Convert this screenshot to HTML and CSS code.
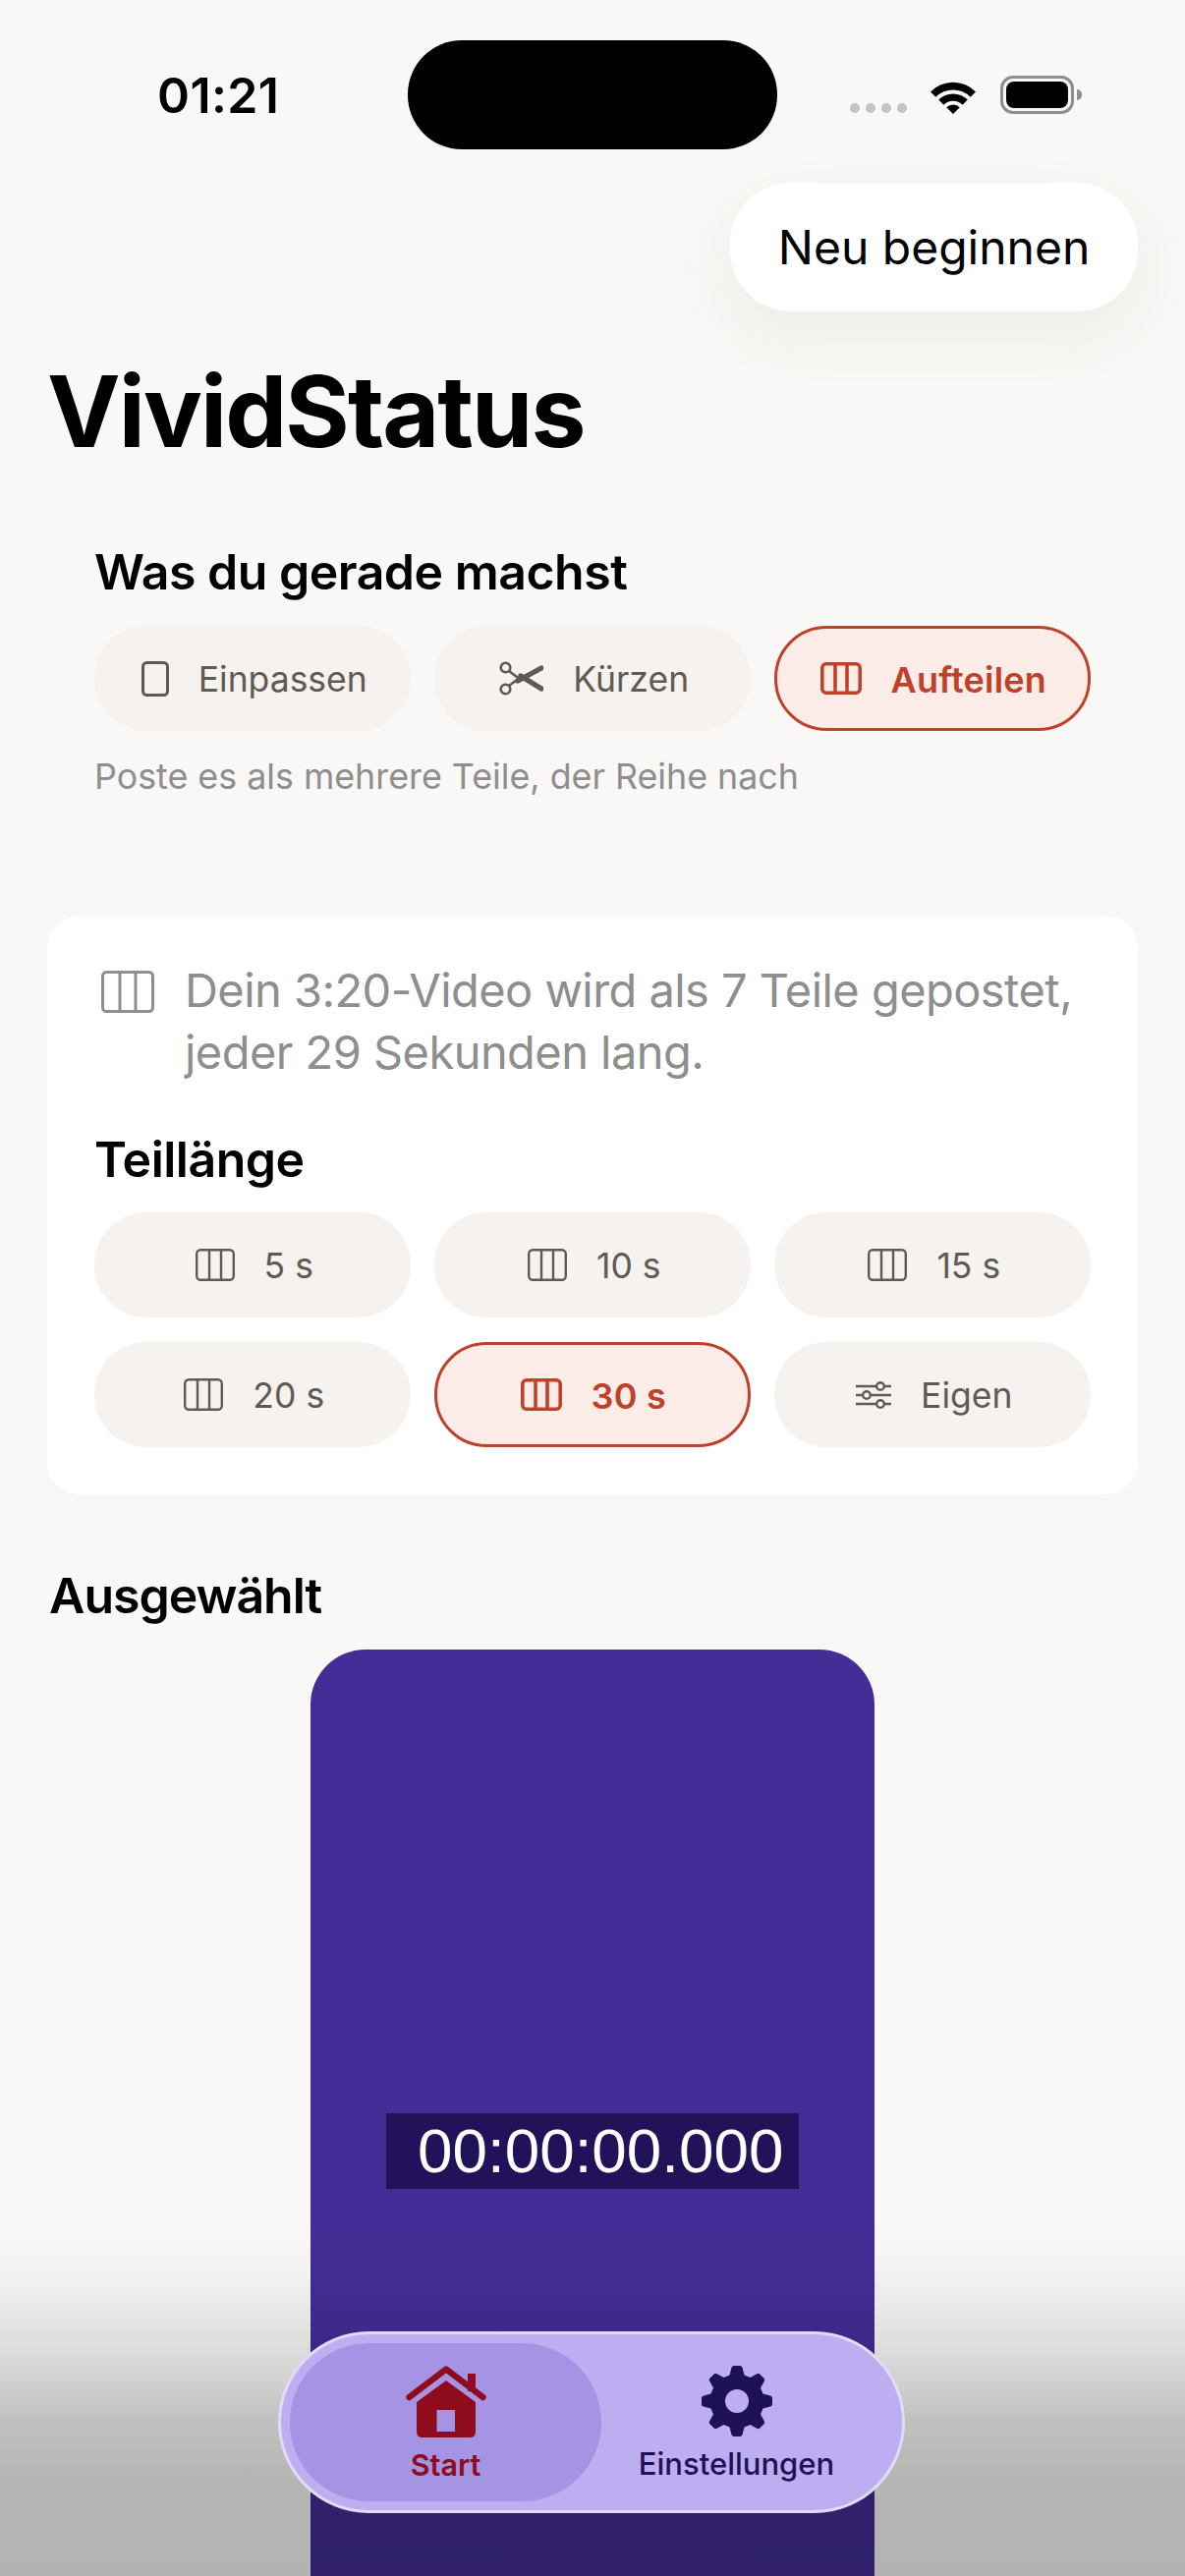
FILE: index.html
```html
<!DOCTYPE html>
<html lang="de">

<head>
  <meta charset="UTF-8">
  <meta name="viewport" content="width=device-width, initial-scale=1.0">
  <title>VividStatus</title>
  <link rel="stylesheet" href="styles.css">
</head>

<body>
  <svg class="defs" width="0" height="0">
    <symbol id="split" viewBox="0 0 40 33">
      <rect x="1.2" y="1.2" width="37.6" height="30.6" rx="4" fill="none" stroke="currentColor" stroke-width="2.4" />
      <path d="M14 1.2V31.8M26 1.2V31.8" fill="none" stroke="currentColor" stroke-width="2.4" />
    </symbol>
    <symbol id="split-bold" viewBox="0 0 42 33">
      <rect x="1.8" y="1.8" width="38.4" height="29.4" rx="4" fill="none" stroke="currentColor" stroke-width="3.6" />
      <path d="M15 1.8V31.2M27 1.8V31.2" fill="none" stroke="currentColor" stroke-width="3.6" />
    </symbol>
  </svg>

  <header class="status">
    <span class="status-time">01:21</span>
    <div class="island"></div>
    <div class="status-icons">
      <div class="signal"><i></i><i></i><i></i><i></i></div>
      <svg class="wifi" viewBox="0 0 50 37" width="50" height="37">
        <path d="M2 14.4A32.3 32.3 0 0 1 48 14.4L42.6 19.8A24.6 24.6 0 0 0 7.4 19.8Z" />
        <path d="M10.2 22.6A20.8 20.8 0 0 1 39.8 22.6L34.6 27.8A13.4 13.4 0 0 0 15.4 27.8Z" />
        <path d="M18.2 30.2A9.8 9.8 0 0 1 31.8 30.2L25 37Z" />
      </svg>
      <div class="battery"><div class="battery-level"></div></div>
    </div>
  </header>

  <main>
    <div class="top-actions">
      <button class="restart">Neu beginnen</button>
    </div>
    <h1>VividStatus</h1>

    <section class="mode">
      <h2>Was du gerade machst</h2>
      <div class="chips">
        <div class="chip">
          <svg width="28" height="36" viewBox="0 0 28 36"><rect x="1.5" y="1.5" width="25" height="33" rx="4" fill="none" stroke="currentColor" stroke-width="3" /></svg>
          <span>Einpassen</span>
        </div>
        <div class="chip">
          <svg width="45" height="35" viewBox="0 0 45 35" fill="none" stroke="currentColor">
            <circle cx="6.5" cy="6.5" r="4.8" stroke-width="2.6" />
            <circle cx="6.5" cy="28.5" r="4.8" stroke-width="2.6" />
            <path d="M10 10L22 19M10 25L22 16" stroke-width="2.6" />
            <path d="M19 20L43 7M22 15L43 28" stroke-width="5.4" stroke-linecap="round" />
          </svg>
          <span>Kürzen</span>
        </div>
        <div class="chip active">
          <svg width="42" height="33"><use href="#split-bold" /></svg>
          <span>Aufteilen</span>
        </div>
      </div>
      <p class="hint">Poste es als mehrere Teile, der Reihe nach</p>
    </section>

    <section class="card">
      <div class="info">
        <svg width="54" height="43" viewBox="0 0 54 43" fill="none" stroke="currentColor" stroke-width="3">
          <rect x="1.5" y="1.5" width="51" height="40" rx="4" />
          <path d="M19 1.5V41.5M35 1.5V41.5" />
        </svg>
        <p>Dein 3:20-Video wird als 7 Teile gepostet,<br>jeder 29 Sekunden lang.</p>
      </div>
      <h2 class="card-title">Teillänge</h2>
      <div class="chips">
        <div class="chip"><svg width="40" height="33"><use href="#split" /></svg><span>5 s</span></div>
        <div class="chip"><svg width="40" height="33"><use href="#split" /></svg><span>10 s</span></div>
        <div class="chip"><svg width="40" height="33"><use href="#split" /></svg><span>15 s</span></div>
        <div class="chip"><svg width="40" height="33"><use href="#split" /></svg><span>20 s</span></div>
        <div class="chip active"><svg width="42" height="33"><use href="#split-bold" /></svg><span>30 s</span></div>
        <div class="chip">
          <svg width="36" height="30" viewBox="0 0 36 30" fill="none" stroke="currentColor" stroke-width="2.4">
            <path d="M0 6H21M29 6H36M0 15H7M15 15H36M0 24H21M29 24H36" />
            <circle cx="25" cy="6" r="3.8" />
            <circle cx="11" cy="15" r="3.8" />
            <circle cx="25" cy="24" r="3.8" />
          </svg>
          <span>Eigen</span>
        </div>
      </div>
    </section>

    <h2 class="selected-title">Ausgewählt</h2>
    <div class="video">
      <div class="timecode">00:00:00.000</div>
    </div>
  </main>

  <div class="bottom-fade"></div>

  <nav class="tabbar">
    <a class="tab current">
      <svg width="82" height="73" viewBox="0 0 82 73">
        <path d="M63 8H71V26H63Z" fill="currentColor" />
        <path d="M3.5 32L41 3.5L78.5 32" fill="none" stroke="currentColor" stroke-width="6.4" stroke-linecap="round" stroke-linejoin="round" />
        <path fill-rule="evenodd" fill="currentColor" d="M41 15L71 37V67Q71 73 65 73H17Q11 73 11 67V37ZM31.5 45V67H50V45Z" />
      </svg>
      <span>Start</span>
    </a>
    <a class="tab">
      <svg width="72" height="72" viewBox="-36 -36 72 72" fill="currentColor">
        <path fill-rule="evenodd" d="M-5.5 -34Q-5 -36 -3 -36H3Q5 -36 5.5 -34L7.5 -26.5L13.5 -24L20.3 -27.8Q22 -28.8 23.5 -27.3L27.3 -23.5Q28.8 -22 27.8 -20.3L24 -13.5L26.5 -7.5L34 -5.5Q36 -5 36 -3V3Q36 5 34 5.5L26.5 7.5L24 13.5L27.8 20.3Q28.8 22 27.3 23.5L23.5 27.3Q22 28.8 20.3 27.8L13.5 24L7.5 26.5L5.5 34Q5 36 3 36H-3Q-5 36 -5.5 34L-7.5 26.5L-13.5 24L-20.3 27.8Q-22 28.8 -23.5 27.3L-27.3 23.5Q-28.8 22 -27.8 20.3L-24 13.5L-26.5 7.5L-34 5.5Q-36 5 -36 3V-3Q-36 -5 -34 -5.5L-26.5 -7.5L-24 -13.5L-27.8 -20.3Q-28.8 -22 -27.3 -23.5L-23.5 -27.3Q-22 -28.8 -20.3 -27.8L-13.5 -24L-7.5 -26.5ZM0 -12A12 12 0 1 0 0 12A12 12 0 1 0 0 -12Z" />
      </svg>
      <span>Einstellungen</span>
    </a>
  </nav>
</body>

</html>
```

FILE: styles.css
```css
html {
  box-sizing: border-box;
  font-family: 'Inter', 'Liberation Sans', sans-serif;
  background-color: #f9f8f6;
}

*,
*::before,
*::after {
  box-sizing: inherit;
}

body {
  position: relative;
  margin: 0;
  width: 1206px;
  height: 2622px;
  overflow: hidden;
  color: #000;
}

.defs {
  position: absolute;
}

h1,
h2,
p {
  margin: 0;
}

/* status bar */
.status {
  display: flex;
  align-items: center;
  height: 111px;
  margin-top: 41px;
  padding-left: 160px;
}

.status-time {
  width: 255px;
  font-size: 50px;
  font-weight: 600;
  line-height: 62px;
  letter-spacing: 0.4px;
}

.island {
  width: 376px;
  height: 111px;
  border-radius: 55px;
  background-color: #000;
}

.status-icons {
  display: flex;
  align-items: flex-end;
  margin-left: 74px;
}

.signal {
  display: flex;
  gap: 6px;
  margin-right: 22px;
  margin-bottom: 1px;
}

.signal i {
  width: 10px;
  height: 10px;
  border-radius: 50%;
  background-color: #c4c4c4;
}

.wifi {
  margin-right: 23px;
}

.battery {
  position: relative;
  width: 75px;
  height: 39px;
  padding: 3px;
  border: 3px solid #8e8e8e;
  border-radius: 13px;
}

.battery::after {
  content: "";
  position: absolute;
  top: 11px;
  right: -11px;
  width: 5px;
  height: 11px;
  border-radius: 0 5px 5px 0;
  background-color: #8e8e8e;
}

.battery-level {
  height: 100%;
  border-radius: 8px;
  background-color: #000;
}

/* header */
.top-actions {
  display: flex;
  justify-content: flex-end;
  margin: 34px 48px 0 0;
}

.restart {
  width: 415px;
  height: 131px;
  padding: 0;
  border: 0;
  border-radius: 62px;
  background-color: #fff;
  box-shadow: 0 24px 60px rgba(120, 100, 80, 0.08);
  color: #000;
  font-family: inherit;
  font-size: 48px;
  line-height: 56px;
}

h1 {
  margin: 42px 0 0 48px;
  font-size: 100px;
  font-weight: 700;
  line-height: 120px;
  letter-spacing: -1.9px;
}

h2 {
  font-size: 50px;
  font-weight: 600;
  line-height: 60px;
  letter-spacing: -0.5px;
}

/* chips */
.chips {
  display: grid;
  grid-template-columns: repeat(3, 321.5px);
  gap: 25px 24.5px;
  margin-top: 25px;
}

.chip {
  display: flex;
  align-items: center;
  justify-content: center;
  gap: 30px;
  height: 107px;
  padding-left: 4px;
  border-radius: 53px;
  background-color: #f5f2ef;
  color: #605a55;
  font-size: 35.5px;
  line-height: 44px;
}

.chip span {
  padding-top: 2px;
}

.chip.active {
  padding-left: 2px;
  border: 3px solid #c0412a;
  background-color: #fcece8;
  color: #c0412a;
  font-size: 36px;
  font-weight: 600;
  letter-spacing: 0.2px;
}

.mode {
  margin: 73px 0 0 96px;
}

.hint {
  margin-top: 24px;
  color: #8e8e8e;
  font-size: 35.8px;
  line-height: 44px;
}

/* split card */
.card {
  margin: 120px 48px 0;
  padding: 44px 48px 48px;
  border-radius: 34px;
  background-color: #fff;
}

.info {
  display: flex;
  align-items: flex-start;
  gap: 31px;
  padding-left: 7px;
  color: #8e8e8e;
  font-size: 47px;
  line-height: 63px;
  letter-spacing: -0.55px;
}

.info svg {
  flex: none;
  margin-top: 12px;
}

.card-title {
  margin-top: 48px;
}

.card-title+.chips {
  margin-top: 24px;
}

.selected-title {
  margin: 73px 0 0 50px;
  letter-spacing: -1px;
}

/* video preview */
.video {
  display: flex;
  align-items: center;
  justify-content: center;
  width: 574px;
  height: 1020px;
  margin: 25px auto 0;
  border-radius: 56px;
  background-color: #432d96;
}

.timecode {
  width: 420px;
  height: 77px;
  padding-left: 32px;
  background-color: #211259;
  color: #fff;
  font-family: 'Liberation Sans', sans-serif;
  font-size: 63.8px;
  line-height: 77px;
}

.bottom-fade {
  position: absolute;
  left: 0;
  right: 0;
  bottom: 0;
  height: 362px;
  background: linear-gradient(to bottom,
      rgba(0, 0, 0, 0),
      rgba(0, 0, 0, 0.02) 50px,
      rgba(0, 0, 0, 0.12) 140px,
      rgba(0, 0, 0, 0.22) 200px,
      rgba(0, 0, 0, 0.27) 260px,
      rgba(0, 0, 0, 0.28));
}

/* tab bar */
.tabbar {
  position: absolute;
  left: 283px;
  top: 2373px;
  display: flex;
  width: 638px;
  height: 185px;
  padding: 9px 31px 9px 9px;
  border: 3px solid rgba(255, 255, 255, 0.55);
  border-radius: 93px;
  background-color: #bcaef0;
}

.tab {
  display: flex;
  flex: 1;
  flex-direction: column;
  align-items: center;
  padding-top: 23px;
  color: #1f1155;
  font-size: 31px;
  font-weight: 500;
  line-height: 36px;
}

.tab span {
  margin-top: 10px;
}

.tab.current {
  flex: none;
  width: 317px;
  border-radius: 81px;
  background-color: #a594e3;
  color: #8f0c1e;
  font-size: 30.5px;
  font-weight: 600;
}
```
